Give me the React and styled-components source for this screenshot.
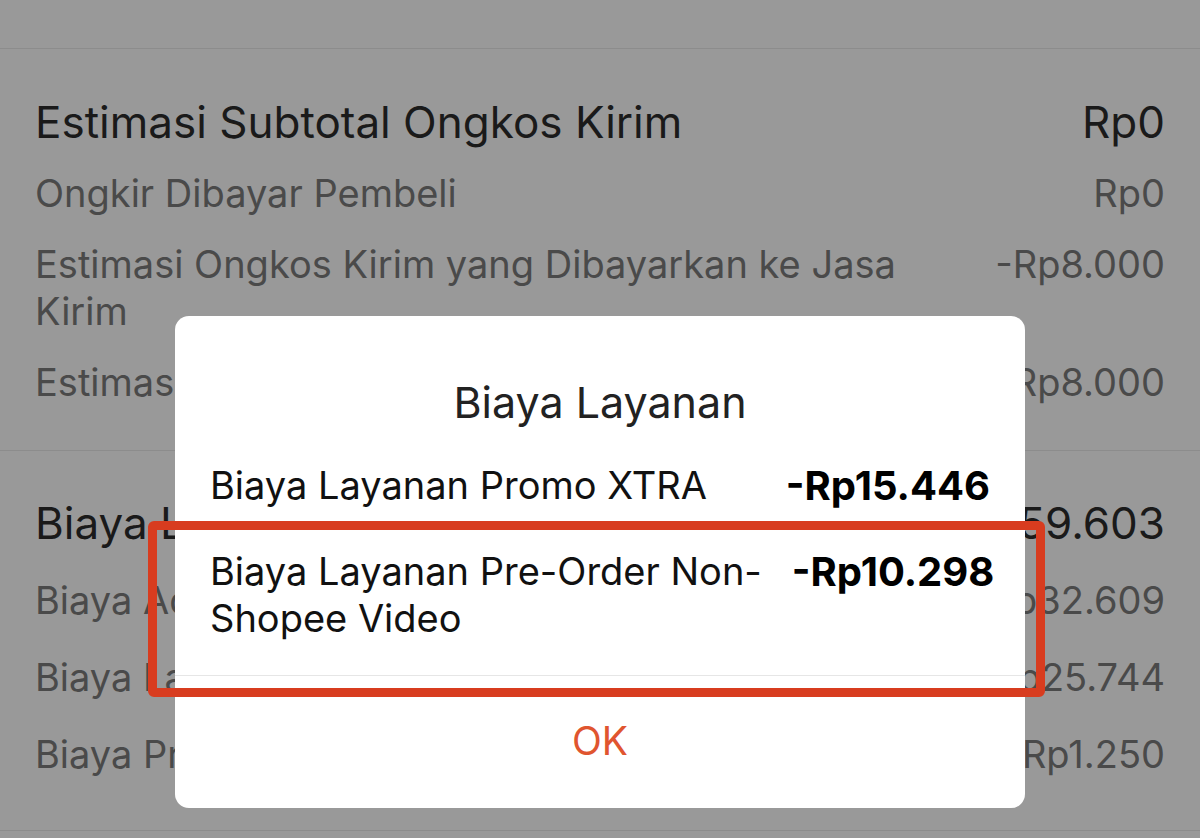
import React from "react";
import styled, { createGlobalStyle } from "styled-components";

const GlobalStyle = createGlobalStyle`
  html, body { margin: 0; padding: 0; background: #999999; }
  body { font-family: Inter, Roboto, "Liberation Sans", sans-serif; overflow: hidden; }
  * { box-sizing: border-box; }
`;

const Page = styled.div`
  position: relative;
  width: 1200px;
  height: 838px;
  overflow: hidden;
  background: #999999;
`;

const Section = styled.section`
  display: flex;
  flex-direction: column;
  gap: ${(p) => p.$gap ?? 24}px;
  padding: ${(p) => p.$pt ?? 48}px 35px ${(p) => p.$pb ?? 44}px;
  margin-top: ${(p) => p.$mt ?? 0}px;
  border-bottom: 1px solid #8c8c8c;
`;

const Row = styled.div`
  display: flex;
  justify-content: space-between;
  align-items: flex-start;
  gap: 40px;
  font-size: ${(p) => (p.$title ? 44 : 38)}px;
  line-height: ${(p) => (p.$title ? 48 : 47)}px;
  color: ${(p) => (p.$title ? "#1a1a1a" : "#4a4a4a")};
  white-space: nowrap;
`;

const Label = styled.span`
  flex: 1;
`;

const Value = styled.span`
  flex: none;
  text-align: right;
`;

const Modal = styled.div`
  position: absolute;
  left: 175px;
  top: 316px;
  width: 850px;
  height: 492px;
  background: #ffffff;
  border-radius: 14px;
  display: flex;
  flex-direction: column;
  overflow: hidden;
`;

const ModalBody = styled.div`
  display: flex;
  flex-direction: column;
  padding: 62px 35px 33px;
  border-bottom: 1px solid #e6e6e6;
`;

const ModalTitle = styled.h2`
  margin: 0 0 36px;
  font-size: 43px;
  line-height: 48px;
  font-weight: 400;
  color: #222222;
  text-align: center;
`;

const FeeList = styled.div`
  display: flex;
  flex-direction: column;
  gap: 39px;
`;

const FeeRow = styled.div`
  display: flex;
  justify-content: space-between;
  align-items: flex-start;
  gap: 30px;
  font-size: 38px;
  line-height: 47px;
  color: #111111;
  white-space: nowrap;
`;

const FeeValue = styled.span`
  flex: none;
  font-size: 40px;
  font-weight: 700;
  color: #000000;
`;

const OkButton = styled.button`
  flex: 1;
  border: 0;
  background: transparent;
  font-family: inherit;
  font-size: 39px;
  color: #e0552f;
  padding: 0 0 4px;
  cursor: pointer;
`;

const Highlight = styled.div`
  position: absolute;
  left: 148px;
  top: 521px;
  width: 897px;
  height: 176px;
  border: 9px solid #d83c1f;
  border-radius: 6px;
  pointer-events: none;
`;

export default function App() {
  return (
    <Page>
      <GlobalStyle />
      <Section $mt={-48} $pt={0} $pb={49}>
        <Row>
          <Label>Harga Asli Produk</Label>
          <Value>Rp105.500</Value>
        </Row>
      </Section>
      <Section $pt={49} $pb={44} $gap={24}>
        <Row $title>
          <Label>Estimasi Subtotal Ongkos Kirim</Label>
          <Value>Rp0</Value>
        </Row>
        <Row>
          <Label>Ongkir Dibayar Pembeli</Label>
          <Value>Rp0</Value>
        </Row>
        <Row>
          <Label>
            Estimasi Ongkos Kirim yang Dibayarkan ke Jasa
            <br />
            Kirim
          </Label>
          <Value>-Rp8.000</Value>
        </Row>
        <Row>
          <Label>Estimasi Ongkos Kirim Program Gratis</Label>
          <Value>Rp8.000</Value>
        </Row>
      </Section>
      <Section $pt={48} $pb={52} $gap={30}>
        <Row $title>
          <Label>Biaya Layanan</Label>
          <Value>-Rp59.603</Value>
        </Row>
        <Row>
          <Label>Biaya Administrasi</Label>
          <Value>-Rp32.609</Value>
        </Row>
        <Row>
          <Label>Biaya Layanan</Label>
          <Value>-Rp25.744</Value>
        </Row>
        <Row>
          <Label>Biaya Proses Pesanan</Label>
          <Value>-Rp1.250</Value>
        </Row>
      </Section>

      <Modal>
        <ModalBody>
          <ModalTitle>Biaya Layanan</ModalTitle>
          <FeeList>
            <FeeRow>
              <span>Biaya Layanan Promo XTRA</span>
              <FeeValue>-Rp15.446</FeeValue>
            </FeeRow>
            <FeeRow>
              <span>
                Biaya Layanan Pre-Order Non-
                <br />
                Shopee Video
              </span>
              <FeeValue>-Rp10.298</FeeValue>
            </FeeRow>
          </FeeList>
        </ModalBody>
        <OkButton>OK</OkButton>
      </Modal>
      <Highlight />
    </Page>
  );
}
